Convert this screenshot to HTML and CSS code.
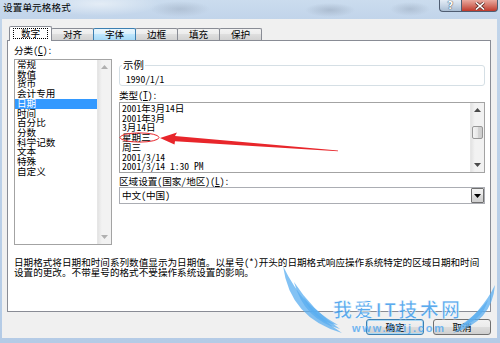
FILE: index.html
```html
<!DOCTYPE html>
<html lang="zh-CN">
<head>
    <meta charset="UTF-8">
    <title>设置单元格格式</title>
    <link rel="stylesheet" href="styles.css">
</head>
<body>
    <div class="titlebar">
        <span class="title">设置单元格格式</span>
        <div class="caption-buttons">
            <span class="cap-btn help">?</span>
            <span class="cap-btn close">
                <svg width="12" height="8" viewBox="0 0 12 8"><path d="M2,0.5 L10,7.5 M10,0.5 L2,7.5" stroke="#5a2a24" stroke-width="3"/><path d="M2,0.5 L10,7.5 M10,0.5 L2,7.5" stroke="#fff" stroke-width="1.6"/></svg>
            </span>
        </div>
    </div>

    <div class="client">
        <!-- Tab strip -->
        <div class="tabs">
            <div class="tab active"><span class="focus">数字</span></div>
            <div class="tab">对齐</div>
            <div class="tab hover">字体</div>
            <div class="tab">边框</div>
            <div class="tab">填充</div>
            <div class="tab">保护</div>
        </div>

        <div class="panel">
            <div class="columns">
                <div class="left-col">
                    <div class="label">分类(<u>C</u>):</div>
                    <div class="listbox category">
                        <ul class="items">
                            <li>常规</li>
                            <li>数值</li>
                            <li>货币</li>
                            <li>会计专用</li>
                            <li class="selected">日期</li>
                            <li>时间</li>
                            <li>百分比</li>
                            <li>分数</li>
                            <li>科学记数</li>
                            <li>文本</li>
                            <li>特殊</li>
                            <li>自定义</li>
                        </ul>
                        <div class="scrollbar disabled">
                            <div class="arrow-btn"><svg width="7" height="4"><path d="M0,4 L3.5,0 L7,4Z"/></svg></div>
                            <div class="track"></div>
                            <div class="arrow-btn"><svg width="7" height="4"><path d="M0,0 L3.5,4 L7,0Z"/></svg></div>
                        </div>
                    </div>
                </div>

                <div class="right-col">
                    <fieldset class="sample">
                        <legend>示例</legend>
                        <div class="sample-value">1990/1/1</div>
                    </fieldset>

                    <div class="label spaced">类型(<u>T</u>):</div>
                    <div class="listbox types">
                        <ul class="items">
                            <li>2001年3月14日</li>
                            <li>2001年3月</li>
                            <li>3月14日</li>
                            <li>星期三</li>
                            <li>周三</li>
                            <li>2001/3/14</li>
                            <li>2001/3/14 1:30 PM</li>
                        </ul>
                        <div class="scrollbar">
                            <div class="arrow-btn"><svg width="7" height="4"><path d="M0,4 L3.5,0 L7,4Z"/></svg></div>
                            <div class="track"><div class="thumb"></div></div>
                            <div class="arrow-btn"><svg width="7" height="4"><path d="M0,0 L3.5,4 L7,0Z"/></svg></div>
                        </div>
                    </div>

                    <div class="label region">区域设置(国家/地区)(<u>L</u>):</div>
                    <div class="combo">
                        <span class="combo-text">中文(中国)</span>
                        <span class="drop-btn"><svg width="7" height="4"><path d="M0,0 L3.5,4 L7,0Z"/></svg></span>
                    </div>
                </div>
            </div>

            <p class="desc">日期格式将日期和时间系列数值显示为日期值。以星号(*)开头的日期格式响应操作系统特定的区域日期和时间<br>设置的更改。不带星号的格式不受操作系统设置的影响。</p>
        </div>

        <div class="buttons">
            <button class="btn default">确定</button>
            <button class="btn">取消</button>
        </div>
    </div>

    <!-- annotation + watermark drawn over the dialog -->
    <svg class="overlay" width="500" height="343" viewBox="0 0 500 343">
        <ellipse cx="139.5" cy="137.5" rx="19.5" ry="4.6" fill="none" stroke="#e8262b" stroke-width="1"/>
        <path d="M160,138 L177,132.5 L175,136 L338,150.4 L338,151.3 L175,141.2 L174.5,144.5 Z" fill="#e8262b"/>

        <g class="watermark">
            <path d="M283,266 Q290,318 342,333 Q303,308 283,266 Z"/>
            <path d="M294,282 Q304,320 340,329 Q312,310 294,282 Z"/>
            <path d="M303,297 Q314,322 338,325 Q318,314 303,297 Z"/>
            <path d="M495,285 Q492,322 453,333 Q482,312 495,285 Z"/>
            <path d="M488,300 Q482,322 456,328 Q476,316 488,300 Z"/>
            <text class="wm-title" x="333" y="317" textLength="127">我爱IT技术网</text>
            <text class="wm-url" x="352" y="332" textLength="92">www.52ij.com</text>
        </g>
    </svg>
</body>
</html>
```
FILE: styles.css
```css
* {
    box-sizing: border-box;
}

body {
    margin: 0;
    width: 500px;
    height: 343px;
    overflow: hidden;
    position: relative;
    font-family: "Noto Sans Mono CJK SC", "Noto Sans CJK SC", sans-serif;
    font-size: 9.6px;
    color: #000;
    background: linear-gradient(180deg, #c2d5ea 0%, #b4cbe6 100%);
}

/* Title bar (aero glass) */
.titlebar {
    height: 19px;
    display: flex;
    align-items: flex-start;
    padding: 0 2px 0 3px;
    background:
        radial-gradient(ellipse 30px 8px at 180px 9px, rgba(150, 165, 185, 0.45), transparent),
        radial-gradient(ellipse 25px 7px at 330px 10px, rgba(140, 155, 175, 0.45), transparent),
        radial-gradient(ellipse 20px 7px at 410px 9px, rgba(140, 155, 175, 0.4), transparent),
        radial-gradient(ellipse 60px 12px at 100px 4px, rgba(255, 255, 255, 0.5), transparent),
        linear-gradient(180deg, #cbdcee 0%, #c1d4ea 100%);
}

.title {
    font-family: "Noto Sans CJK SC", sans-serif;
    line-height: 15px;
    letter-spacing: 0.1px;
}

.caption-buttons {
    margin-left: auto;
    display: flex;
    height: 12px;
}

.cap-btn {
    display: flex;
    align-items: center;
    justify-content: center;
    height: 12px;
    border: 1px solid #4f5d72;
    border-top: none;
}

.help {
    width: 22px;
    border-radius: 0 0 0 4px;
    border-right: none;
    background: linear-gradient(180deg, #e4ecf5 0%, #c8d6e6 50%, #aabdd3 100%);
    color: #fff;
    font-family: "DejaVu Sans", sans-serif;
    font-weight: bold;
    font-size: 10px;
    text-shadow: 0 0 1px #2d3c52, 0 0 1px #2d3c52;
}

.close {
    width: 37px;
    border-radius: 0 0 4px 0;
    background: linear-gradient(180deg, #e9a99f 0%, #d47467 50%, #c0392b 100%);
}

/* Dialog client area */
.client {
    margin-left: 2px;
    width: 495px;
    height: 319px;
    padding: 7px 6px 0 5px;
    background: #f0f0f0;
}

.tabs {
    display: flex;
    align-items: flex-end;
    height: 14px;
    padding-left: 3px;
}

.tab {
    width: 43px;
    height: 12px;
    margin-left: -1px;
    border: 1px solid #898c95;
    border-bottom: none;
    border-radius: 2px 2px 0 0;
    background: linear-gradient(180deg, #f3f3f3 0%, #ebebeb 50%, #dedede 50%, #d2d2d2 100%);
    text-align: center;
    line-height: 11px;
}

.tab.hover {
    position: relative;
    border-color: #3c7fb1;
    background: linear-gradient(180deg, #eaf6fd 0%, #d9f0fc 50%, #bee6fd 50%, #a7d9f5 100%);
}

.tab.active {
    position: relative;
    z-index: 1;
    height: 15px;
    margin-bottom: -1px;
    background: #fff;
    padding-top: 1px;
}

.focus {
    display: inline-block;
    padding: 0 7px;
    line-height: 9px;
    border: 1px dotted #000;
}

.panel {
    height: 272px;
    padding: 3px 5px 0 6px;
    border: 1px solid #898c95;
    background: #fff;
}

.columns {
    display: flex;
    gap: 7px;
}

.left-col {
    width: 98px;
}

.right-col {
    flex: 1;
    padding-top: 16px;
}

.label {
    line-height: 12px;
    margin-bottom: 3px;
}

.label.spaced {
    margin-top: 3px;
    margin-bottom: 1px;
}

.label.region {
    margin-top: 2px;
    margin-bottom: 0;
}

.listbox {
    display: flex;
    border: 1px solid #a3a3a3;
    background: #fff;
}

.category {
    height: 186px;
}

.types {
    height: 71px;
}

.items {
    flex: 1;
    margin: 0;
    padding: 0 0 0 2px;
    list-style: none;
    line-height: 9.7px;
    white-space: nowrap;
}

.types .items {
    padding-top: 1px;
}

.items li.selected {
    margin-left: -2px;
    padding-left: 2px;
    background: #3399ff;
    color: #fff;
}

.scrollbar {
    width: 14px;
    display: flex;
    flex-direction: column;
    background: linear-gradient(90deg, #e3e3e3 0%, #f2f2f2 30%, #f2f2f2 100%);
    border-left: 1px solid #e6e6e6;
}

.arrow-btn {
    height: 14px;
    display: flex;
    align-items: center;
    justify-content: center;
    fill: #4a4a4a;
}

.scrollbar.disabled .arrow-btn {
    fill: #b0b0b0;
}

.track {
    flex: 1;
    padding: 9px 1px 0 1px;
}

.thumb {
    height: 13px;
    border: 1px solid #979797;
    border-radius: 2px;
    background: linear-gradient(90deg, #f4f4f4 0%, #e6e6e6 50%, #d5d5d5 50%, #cdcdcd 100%);
}

.sample {
    margin: 0;
    padding: 3px 0 0 2px;
    height: 26px;
    border: 1px solid #d5dfe5;
    border-radius: 3px;
}

.sample legend {
    padding: 0 1px;
    font-size: 10.4px;
    line-height: 10px;
}

.sample-value {
    padding-left: 4px;
    line-height: 12px;
}

.combo {
    height: 17px;
    display: flex;
    align-items: center;
    border: 1px solid #abadb3;
    background: #fff;
}

.combo-text {
    flex: 1;
    padding-left: 2px;
    line-height: 15px;
}

.drop-btn {
    width: 13px;
    height: 15px;
    display: flex;
    align-items: center;
    justify-content: center;
    border: 1px solid #707070;
    border-radius: 1px;
    background: linear-gradient(180deg, #f2f2f2 0%, #ebebeb 50%, #dddddd 50%, #cfcfcf 100%);
    fill: #000;
}

.desc {
    margin: 12px 0 0;
    line-height: 10px;
    white-space: nowrap;
}

.buttons {
    display: flex;
    justify-content: flex-end;
    gap: 9px;
    margin-top: 7px;
}

.btn {
    width: 58px;
    height: 16px;
    padding: 0;
    font: inherit;
    line-height: 14px;
    color: #000;
    border: 1px solid #707070;
    border-radius: 3px;
    background: linear-gradient(180deg, #f2f2f2 0%, #ebebeb 50%, #dddddd 50%, #cfcfcf 100%);
}

.btn.default {
    border-color: #3c7fb1;
    box-shadow: inset 0 0 0 1px #a8d8f5;
}

/* Overlay: red annotation and site watermark */
.overlay {
    position: absolute;
    top: 0;
    left: 0;
    pointer-events: none;
}

.watermark path {
    fill: #5aaef0;
    opacity: 0.75;
}

.wm-title {
    font-family: "Noto Sans CJK SC", sans-serif;
    font-size: 19px;
    font-weight: bold;
    fill: #3f9ceb;
    stroke: #ffffff;
    stroke-width: 0.6;
    opacity: 0.85;
}

.wm-url {
    font-family: "Liberation Sans", sans-serif;
    font-size: 11px;
    font-weight: bold;
    fill: #52a8f0;
    opacity: 0.8;
}
```
